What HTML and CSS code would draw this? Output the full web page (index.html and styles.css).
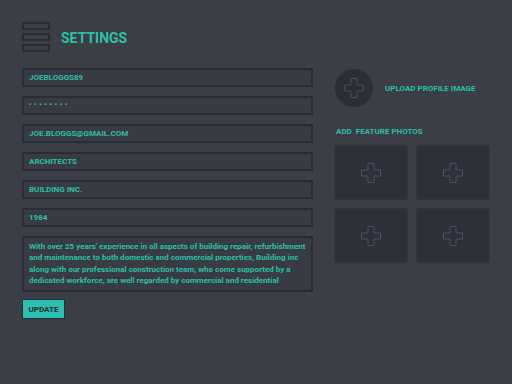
FILE: index.html
```html
<!DOCTYPE html>
<html>
<head>
<meta charset="utf-8">
<link rel="stylesheet" href="styles.css">
</head>
<body>
<div class="page">
  <header class="header">
    <div class="burger"><span></span><span></span><span></span></div>
    <h1 class="title">SETTINGS</h1>
  </header>
  <div class="main">
    <div class="form">
      <div class="field">JOEBLOGGS89</div>
      <div class="field dots">••••••••</div>
      <div class="field">JOE.BLOGGS@GMAIL.COM</div>
      <div class="field">ARCHITECTS</div>
      <div class="field">BUILDING INC.</div>
      <div class="field">1984</div>
      <div class="area">With over 25 years' experience in all aspects of building repair, refurbishment and maintenance to both domestic and commercial properties, Building inc along with our professional construction team, who come supported by a dedicated workforce, are well regarded by commercial and residential</div>
      <button class="btn">UPDATE</button>
    </div>
    <div class="side">
      <div class="profile">
        <div class="avatar">
          <svg width="22" height="22" viewBox="0 0 22 22"><path d="M8 1.5h6v6.5h6.5v6h-6.5v6.5h-6v-6.5h-6.5v-6h6.5z" fill="none" stroke="#4a4e5a" stroke-width="1"/></svg>
        </div>
        <span class="upload">UPLOAD PROFILE IMAGE</span>
      </div>
      <div class="label">ADD&nbsp; FEATURE PHOTOS</div>
      <div class="grid">
        <div class="photo"><svg width="22" height="22" viewBox="0 0 22 22"><path d="M8 1.5h6v6.5h6.5v6h-6.5v6.5h-6v-6.5h-6.5v-6h6.5z" fill="none" stroke="#4d5160" stroke-width="1"/></svg></div>
        <div class="photo"><svg width="22" height="22" viewBox="0 0 22 22"><path d="M8 1.5h6v6.5h6.5v6h-6.5v6.5h-6v-6.5h-6.5v-6h6.5z" fill="none" stroke="#4d5160" stroke-width="1"/></svg></div>
        <div class="photo"><svg width="22" height="22" viewBox="0 0 22 22"><path d="M8 1.5h6v6.5h6.5v6h-6.5v6.5h-6v-6.5h-6.5v-6h6.5z" fill="none" stroke="#4d5160" stroke-width="1"/></svg></div>
        <div class="photo"><svg width="22" height="22" viewBox="0 0 22 22"><path d="M8 1.5h6v6.5h6.5v6h-6.5v6.5h-6v-6.5h-6.5v-6h6.5z" fill="none" stroke="#4d5160" stroke-width="1"/></svg></div>
      </div>
    </div>
  </div>
</div>
</body>
</html>
```
FILE: styles.css
```css
html, body {
  margin: 0;
  padding: 0;
  background: #3b3e47;
  width: 512px;
  height: 384px;
  overflow: hidden;
  font-family: "Roboto", "Liberation Sans", sans-serif;
}
.page {
  padding: 22px 22px 0 22px;
}
.header {
  display: flex;
  align-items: center;
  gap: 11px;
  height: 30px;
}
.burger {
  display: flex;
  flex-direction: column;
  gap: 3px;
}
.burger span {
  display: block;
  width: 24px;
  height: 4px;
  border: 2px solid #2a2c33;
  background: #3b3e47;
}
.title {
  margin: 0;
  margin-top: 2px;
  font-size: 14px;
  font-weight: 700;
  color: #2dbfa6;
}
.main {
  display: flex;
  margin-top: 16px;
}
.form {
  flex: none;
  width: 291px;
  display: flex;
  flex-direction: column;
  gap: 9px;
}
.field {
  box-sizing: border-box;
  height: 19px;
  border: 2px solid #2b2d34;
  background: #383b44;
  color: #2dbfa6;
  font-size: 8px;
  font-weight: 700;
  line-height: 15px;
  padding-left: 5px;
}
.field.dots {
  font-size: 7px;
  letter-spacing: 2.6px;
}
.area {
  box-sizing: border-box;
  height: 56px;
  border: 2px solid #2b2d34;
  background: #383b44;
  color: #2dbfa6;
  font-size: 8px;
  font-weight: 700;
  line-height: 11.3px;
  padding: 3px 5px 0 5px;
  overflow: hidden;
}
.btn {
  align-self: flex-start;
  margin-top: -2px;
  height: 20px;
  width: 43px;
  padding: 0;
  border: 1px solid #2a2c33;
  background: #2dbfb0;
  color: #1d2a2e;
  font-family: "Roboto", "Liberation Sans", sans-serif;
  font-size: 8px;
  font-weight: 700;
}
.side {
  margin-left: 21px;
  display: flex;
  flex-direction: column;
}
.profile {
  display: flex;
  align-items: center;
  gap: 12px;
  margin-left: 1px;
  margin-top: 1px;
}
.avatar {
  width: 38px;
  height: 38px;
  border-radius: 50%;
  background: #2c2e37;
  display: flex;
  align-items: center;
  justify-content: center;
}
.upload {
  color: #2dbfa6;
  font-size: 8px;
  font-weight: 700;
}
.label {
  margin-top: 20px;
  margin-left: 2px;
  color: #2dbfa6;
  font-size: 8px;
  font-weight: 700;
}
.grid {
  margin-top: 9px;
  display: grid;
  grid-template-columns: 74px 74px;
  grid-auto-rows: 55px;
  column-gap: 8px;
  row-gap: 8px;
}
.photo {
  background: #2d3039;
  border: 1px solid #34363e;
  display: flex;
  align-items: center;
  justify-content: center;
}
```
